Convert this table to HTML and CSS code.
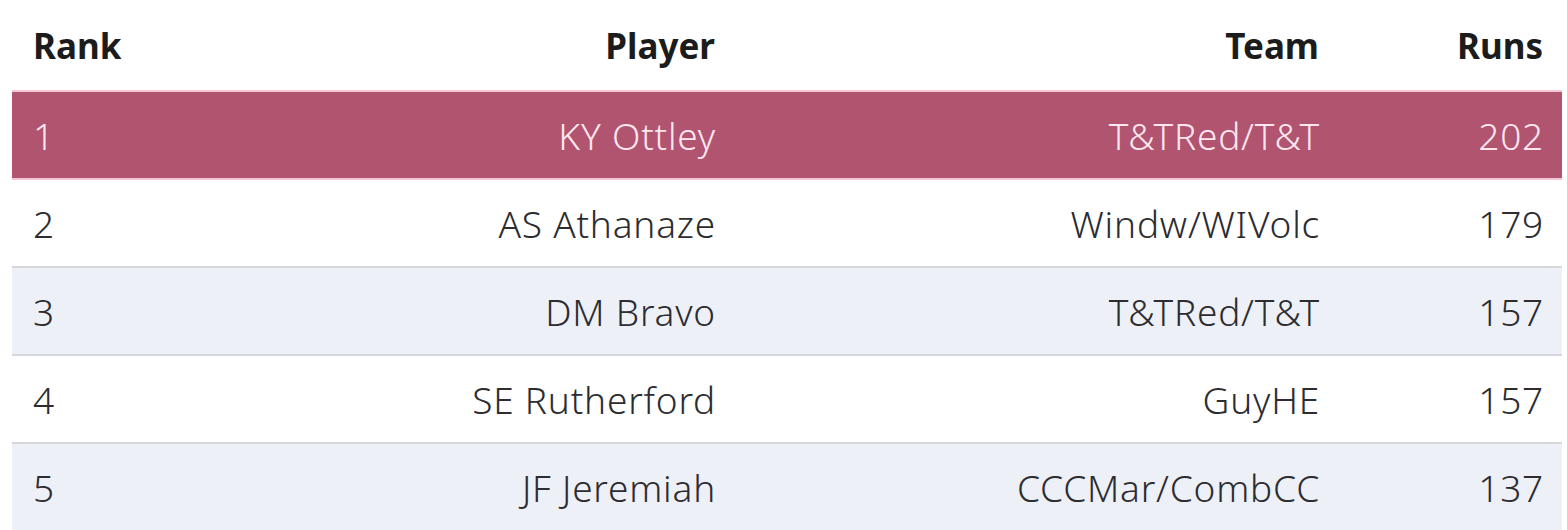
FILE: index.html
```html
<!DOCTYPE html>
<html>
<head>
<meta charset="utf-8">
<link rel="stylesheet" href="styles.css">
</head>
<body>
<table class="stats">
  <thead>
    <tr>
      <th class="rank">Rank</th>
      <th class="player">Player</th>
      <th class="team">Team</th>
      <th class="runs">Runs</th>
    </tr>
  </thead>
  <tbody>
    <tr class="top">
      <td class="rank">1</td><td class="player">KY Ottley</td><td class="team">T&amp;TRed/T&amp;T</td><td class="runs">202</td>
    </tr>
    <tr>
      <td class="rank">2</td><td class="player">AS Athanaze</td><td class="team">Windw/WIVolc</td><td class="runs">179</td>
    </tr>
    <tr class="alt">
      <td class="rank">3</td><td class="player">DM Bravo</td><td class="team">T&amp;TRed/T&amp;T</td><td class="runs">157</td>
    </tr>
    <tr>
      <td class="rank">4</td><td class="player">SE Rutherford</td><td class="team">GuyHE</td><td class="runs">157</td>
    </tr>
    <tr class="alt">
      <td class="rank">5</td><td class="player">JF Jeremiah</td><td class="team">CCCMar/CombCC</td><td class="runs">137</td>
    </tr>
  </tbody>
</table>
</body>
</html>
```
FILE: styles.css
```css
html, body {
  margin: 0;
  padding: 0;
  background: #ffffff;
}
body {
  padding-left: 12px;
  font-family: "Noto Sans", "Open Sans", sans-serif;
}
.stats {
  width: 1550px;
  border-collapse: collapse;
  table-layout: fixed;
}
.stats th, .stats td {
  padding: 0 19px 0 21px;
  white-space: nowrap;
}
.stats th {
  height: 91px;
  font-size: 35px;
  font-weight: 700;
  color: #1c1c1c;
  box-sizing: border-box;
}
.stats td {
  height: 88px;
  font-size: 37px;
  font-weight: 300;
  letter-spacing: 0.8px;
  color: #2c2c31;
  box-sizing: border-box;
  border-top: 2px solid #d6d6dd;
}
.rank { width: 160px; text-align: left; }
.player { width: 562px; text-align: right; }
.team { width: 604px; text-align: right; }
.runs { text-align: right; }
.stats td.runs, .stats td.player, .stats td.team { padding-right: 18px; }
.stats tr.top td {
  background: #b0546f;
  color: #fde6f0;
  border-top: 2px solid #f4c6d6;
  border-bottom: 2px solid #f4c6d6;
}
.stats tr.alt td {
  background: #eef0f7;
}
```
